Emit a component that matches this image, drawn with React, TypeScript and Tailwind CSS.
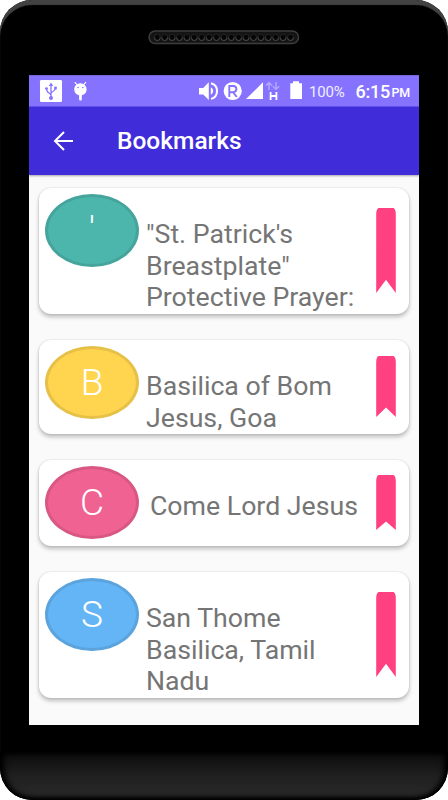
import React from "react";

type Bookmark = {
  id: number;
  letter: string;
  lines: string[];
  card: string;
  oval: string;
  text: string;
  ribbonTop: string;
  ribbonHeight: number;
};

const bookmarks: Bookmark[] = [
  { id: 1, letter: "'", lines: ["\"St. Patrick's", "Breastplate\"", "Protective Prayer:"], card: "h-[126px]", oval: "bg-[#4db6ac] border-[#45a49b]", text: "ml-[7px]", ribbonTop: "mt-[20.5px]", ribbonHeight: 85 },
  { id: 2, letter: "B", lines: ["Basilica of Bom", "Jesus, Goa"], card: "h-[94px]", oval: "bg-[#ffd54f] border-[#e6c047]", text: "ml-[7px]", ribbonTop: "mt-[16.5px]", ribbonHeight: 61 },
  { id: 3, letter: "C", lines: ["Come Lord Jesus"], card: "h-[86px]", oval: "bg-[#f06292] border-[#d85883]", text: "ml-[11px]", ribbonTop: "mt-[15.5px]", ribbonHeight: 55 },
  { id: 4, letter: "S", lines: ["San Thome", "Basilica, Tamil", "Nadu"], card: "h-[126px]", oval: "bg-[#64b5f6] border-[#5aa3dd]", text: "ml-[7px]", ribbonTop: "mt-[20.5px]", ribbonHeight: 85 },
];

function Ribbon({ height }: { height: number }) {
  const notch = height * 0.845;
  return (
    <svg width="20" height={height} viewBox={`0 0 20 ${height}`} fill="#ff4081">
      <path d={`M2.6 0H17.4Q19.7 1 19.8 6V${height}L10 ${notch}L.2 ${height}V6Q.3 1 2.6 0Z`} />
    </svg>
  );
}

function Card({ item }: { item: Bookmark }) {
  return (
    <div className={`${item.card} flex w-[370px] shrink-0 items-start rounded-[12px] bg-white pl-[6px] shadow-[0_3px_4px_rgba(0,0,0,0.24),0_0_2px_rgba(0,0,0,0.16)]`}>
      <div className={`${item.oval} mt-[6.5px] flex h-[73px] w-[94px] shrink-0 items-center justify-center rounded-[50%] border-[3px] text-[37px] leading-[73px] font-light text-white`}>
        {item.letter}
      </div>
      <div className={`${item.text} mt-[31.5px] grow text-[26.7px] leading-[31.6px] whitespace-nowrap text-[#757575]`}>
        {item.lines.map((line) => (
          <div key={line}>{line}</div>
        ))}
      </div>
      <div className={`${item.ribbonTop} mr-[13.5px] shrink-0`}>
        <Ribbon height={item.ribbonHeight} />
      </div>
    </div>
  );
}

function StatusBar() {
  return (
    <div className="flex h-[32px] items-start border-t border-b border-t-[#7568dc] border-b-[#6254ed] bg-[#8573ff] text-white">
      <svg width="64" height="30" viewBox="29 76 64 30">
        <rect x="40" y="80" width="22" height="22" rx="1.2" fill="#fff" />
        <g fill="none" stroke="#8573ff" strokeWidth="1.3">
          <path d="M51 84V98M51 95.5C51 93 46.5 93.5 46.5 89M51 93.5C51 91 55.5 92 55.5 88" />
        </g>
        <g fill="#8573ff">
          <path d="M51 82.4L53.2 86H48.8Z" />
          <circle cx="51" cy="98" r="2" />
          <circle cx="46.5" cy="88.6" r="1.4" />
          <rect x="54.2" y="86.6" width="2.6" height="2.8" />
        </g>
        <path d="M74.7 82.2L77 84.6M86 82.2L83.7 84.6" stroke="#fff" strokeWidth="1.1" />
        <circle cx="80.4" cy="89.4" r="6.2" fill="#fff" />
        <rect x="79.1" y="93" width="2.7" height="7.6" rx="1" fill="#fff" />
        <g fill="#8573ff"><circle cx="78" cy="87.5" r=".8" /><circle cx="82.8" cy="87.5" r=".8" /></g>
      </svg>
      <svg className="ml-[105px]" width="106" height="30" viewBox="198 76 106 30">
        <path d="M199 88H203.2L208.8 82.2V100L203.2 94.5H199Z" fill="#fff" />
        <path d="M210.8 87.2Q213.2 88.5 213.2 91Q213.2 93.6 210.8 95Z" fill="#fff" />
        <path d="M211 83.3C219 85.2 219 96.8 211 98.9" fill="none" stroke="#fff" strokeWidth="2" />
        <circle cx="232.7" cy="91" r="9.1" fill="#fff" />
        <path d="M229.3 97V86H233Q236.4 86 236.4 89.1Q236.4 92.2 233 92.2H229.3M233.2 92.2L236.7 97" fill="none" stroke="#8573ff" strokeWidth="1.9" />
        <path d="M263 82.3V99H246Z" fill="#fff" />
        <g fill="none" stroke="#b0a5ff" strokeWidth="1.5">
          <path d="M269 90V82.5M265.8 85.8L269 82.5L272.2 85.8M276 82V89.3M272.8 86.2L276 89.3L279.2 86.2" />
        </g>
        <path d="M270.6 92V100M276.4 92V100M270.6 96H276.4" fill="none" stroke="#fff" strokeWidth="1.8" />
        <path d="M290.3 83.2H293V81.3H299V83.2H302V99H290.3Z" fill="#fff" />
      </svg>
      <span className="ml-[5px] mt-[1px] w-[46.5px] text-[15px] leading-[30px] tracking-[-0.2px] whitespace-nowrap text-[#f0eeff]">100%</span>
      <span className="mt-[1px] w-[36px] text-[18px] leading-[30px] font-medium tracking-[-0.2px] whitespace-nowrap">6:15</span>
      <span className="mt-[2px] text-[12.5px] leading-[30px] font-medium tracking-[-0.2px]">PM</span>
    </div>
  );
}

function Speaker() {
  return (
    <svg width="152" height="15" viewBox="0 0 152 15">
      <rect x="1" y="1" width="149.5" height="12.5" rx="6.2" fill="#141414" stroke="#3d3d3d" strokeWidth="1.5" />
      {Array.from({ length: 19 }, (_, i) => (
        <g key={i}>
          <circle cx={9.3 + i * 7.4} cy="7.3" r="3" fill="#050505" stroke="#292929" strokeWidth=".8" />
          <path d={`M${6.4 + i * 7.4} 7.5a2.9 3.2 0 0 0 5.8 0`} fill="none" stroke="#4a4a4a" strokeWidth=".9" />
        </g>
      ))}
    </svg>
  );
}

export default function App() {
  return (
    <div className="h-[800px] w-[448px] overflow-hidden bg-white font-['Roboto',sans-serif]">
      <div className="flex h-[800px] flex-col items-center overflow-hidden rounded-[32px] bg-black shadow-[inset_0_5px_1px_#424242]">
        <div className="flex h-[75px] w-full shrink-0 justify-center pt-[30px]">
          <Speaker />
        </div>
        <div className="flex h-[650px] w-[390px] shrink-0 flex-col overflow-hidden bg-[#fafafa]">
          <StatusBar />
          <header className="flex h-[67.5px] shrink-0 items-center bg-[#412cda] text-white shadow-[0_1px_2px_rgba(0,0,0,0.35)]">
            <svg className="ml-[24px]" width="22" height="22" viewBox="0 0 22 22" fill="none" stroke="#fff" strokeWidth="2">
              <path d="M20 11H2M11 2L2 11L11 20" />
            </svg>
            <h1 className="ml-[42px] text-[24.5px] leading-[32px] font-medium">Bookmarks</h1>
          </header>
          <main className="flex flex-col items-center gap-[26px] pt-[13px]">
            {bookmarks.map((item) => <Card key={item.id} item={item} />)}
          </main>
        </div>
        <div className="mt-[27px] h-[48px] w-full shrink-0 rounded-b-[32px] bg-gradient-to-b from-[#0c0c0c] via-[#202020] to-[#2a2a2a] shadow-[inset_0_-2px_4px_#000,inset_4px_0_6px_#000,inset_-4px_0_6px_#000]" />
      </div>
    </div>
  );
}
